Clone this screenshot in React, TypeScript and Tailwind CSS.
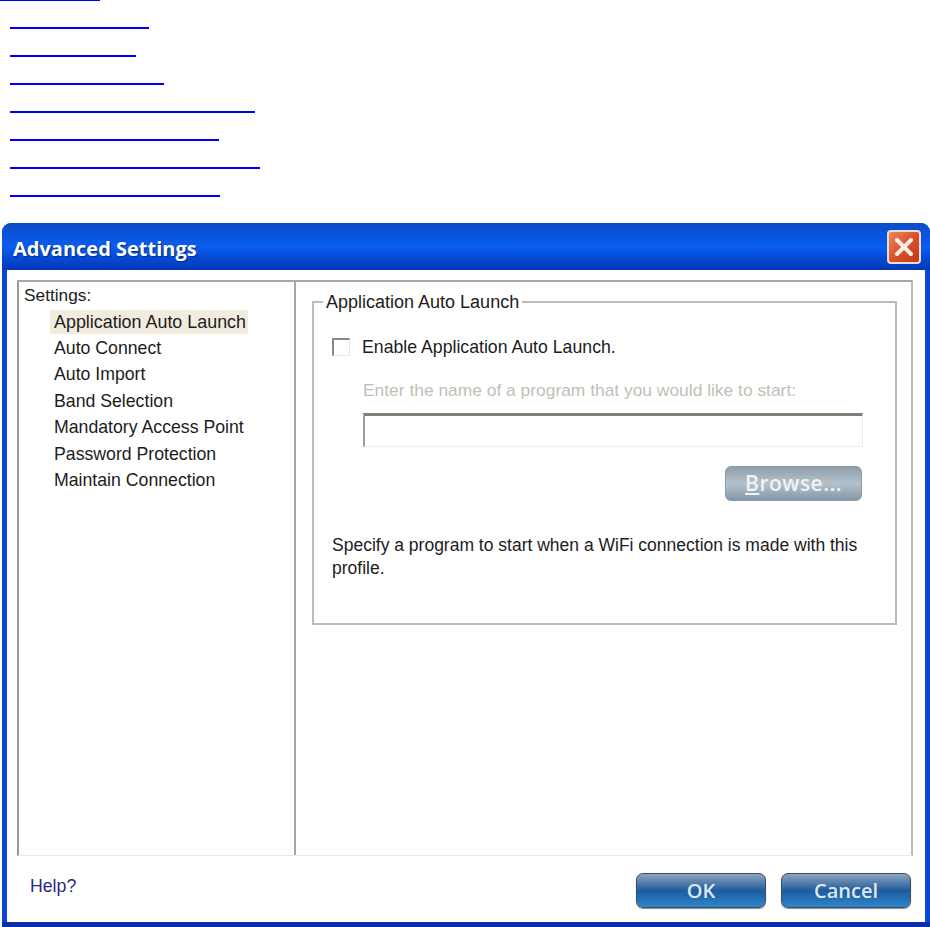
const linkWidths = ["w-[139px]", "w-[126px]", "w-[154px]", "w-[245px]", "w-[209px]", "w-[250px]", "w-[210px]"];

const settings = [
  "Auto Connect",
  "Auto Import",
  "Band Selection",
  "Mandatory Access Point",
  "Password Protection",
  "Maintain Connection",
];

function FooterButton({ label }: { label: string }) {
  return (
    <button className="w-[130px] h-[35px] rounded-[7px] border border-[#3a4f66] bg-gradient-to-b from-[#8ea4bb] via-[#1c5c9c] to-[#2f86cc] text-[#dfe9f2] text-[20px] font-semibold font-['Open_Sans',sans-serif] shadow-[0_1px_1px_#8a8a8a]">
      {label}
    </button>
  );
}

export default function App() {
  return (
    <div className="h-[927px] w-[930px] overflow-hidden bg-white font-['Liberation_Sans',Arial,sans-serif] text-[17.7px] text-[#1c1c1c]">

      {/* Empty links at the top */}
      <div className="flex flex-col gap-[26px]">
        <div className="h-[1px] w-[100px] bg-[#0000ff]"></div>
        {linkWidths.map((w) => (
          <div key={w} className={`h-[2px] ml-[10px] bg-[#0000ff] ${w}`}></div>
        ))}
      </div>

      {/* Dialog */}
      <div className="mt-[26px] ml-[2px] w-[928px] h-[704px] flex flex-col rounded-t-[9px] overflow-hidden bg-[#0a45d8] border-b-[5px] border-[#0530a8]">

        {/* Title bar */}
        <div className="h-[47px] shrink-0 flex items-center justify-between pl-[11px] pr-[9px] bg-gradient-to-b from-[#0a4cc8] via-[#0a5cf0] to-[#0338b8]">
          <span className="pt-[4px] text-white text-[20px] font-bold font-['Open_Sans',sans-serif] [text-shadow:1px_1px_1px_#0a2a80]">
            Advanced Settings
          </span>
          <div className="w-[34px] h-[34px] rounded-[4px] border-2 border-[#e8dcd8] bg-gradient-to-br from-[#e88a60] via-[#d9502a] to-[#c03a18] flex items-center justify-center">
            <svg width="24" height="24" viewBox="0 0 24 24">
              <path d="M5 5 L19 19 M19 5 L5 19" stroke="#fbeee6" strokeWidth="4" strokeLinecap="round" />
            </svg>
          </div>
        </div>

        {/* Client area */}
        <div className="flex-1 mx-[5px] bg-white pt-[10px] pl-[10px] pr-[12px] flex flex-col">

          {/* Main panel */}
          <div className="h-[576px] shrink-0 flex border-t-[2px] border-l-[2px] border-r-[2px] border-b border-t-[#a8a89c] border-l-[#9a9a8e] border-r-[#bcbcb2] border-b-[#e8e8e4]">

            {/* Settings tree */}
            <div className="w-[277px] shrink-0 border-r-[2px] border-[#a8a89c] pt-[2px]">
              <div className="pl-[5px] h-[23px] leading-[23px] text-[17.3px]">Settings:</div>
              <div className="mt-[3px] mb-[1px] ml-[31px] w-[198px] h-[24px] leading-[24px] pl-[4px] bg-[#f2ecdf] text-[17.9px]">
                Application Auto Launch
              </div>
              {settings.map((s) => (
                <div key={s} className="ml-[35px] h-[26.4px] leading-[26.4px]">
                  {s}
                </div>
              ))}
            </div>

            {/* Right pane */}
            <div className="flex-1 pl-[16px] pr-[14px] pt-[10px]">
              <fieldset className="h-[333px] border-[2px] border-[#bdbdb4] pl-[18px]">
                <legend className="ml-[-9px] px-[3px] leading-[20px] text-[18px]">Application Auto Launch</legend>

                <div className="flex items-center mt-[25px] h-[20px]">
                  <div className="w-[18px] h-[18px] border-t-[2px] border-l-[2px] border-t-[#8a8a80] border-l-[#8a8a80] border-r border-b border-r-[#e4e4e0] border-b-[#e4e4e0]"></div>
                  <span className="ml-[12px]">Enable Application Auto Launch.</span>
                </div>

                <div className="ml-[31px] mt-[23px] text-[#bfbfb6] leading-[20px] text-[17.4px]">
                  Enter the name of a program that you would like to start:
                </div>

                <div className="ml-[31px] mt-[13px] w-[500px] h-[34px] border-t-[3px] border-l-[2px] border-t-[#808076] border-l-[#a0a096] border-r border-b border-r-[#ececec] border-b-[#ececec]"></div>

                <div className="mt-[19px] ml-[393px] w-[137px] h-[35px] rounded-[6px] bg-gradient-to-b from-[#8f9eab] via-[#b5c2cc] to-[#8398aa] border border-[#8f9aa4] flex items-center justify-center text-[#eef3f6] text-[21px] font-semibold tracking-[0.5px] font-['Open_Sans',sans-serif]">
                  <span><span className="underline">B</span>rowse...</span>
                </div>

                <p className="mt-[33px] w-[540px] leading-[23px] text-[17.5px]">
                  Specify a program to start when a WiFi connection is made with this profile.
                </p>
              </fieldset>
            </div>
          </div>

          {/* Footer */}
          <div className="flex-1 flex items-start justify-between pl-[13px] pr-[2px]">
            <span className="mt-[20px] text-[#2a2a80] leading-[20px]">Help?</span>
            <div className="mt-[17px] flex gap-[15px]">
              <FooterButton label="OK" />
              <FooterButton label="Cancel" />
            </div>
          </div>
        </div>
      </div>
    </div>
  );
}
